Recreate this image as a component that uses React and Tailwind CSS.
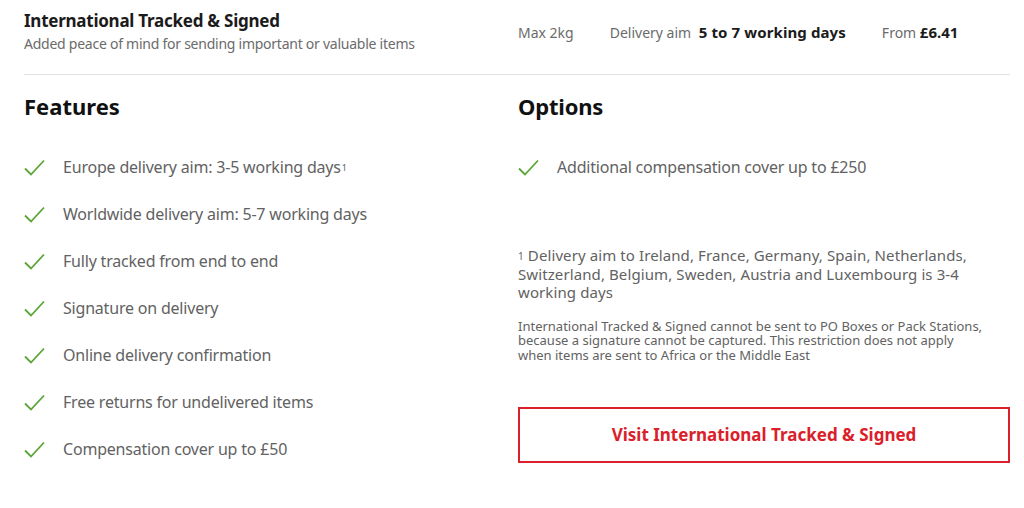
const features = [
  { text: "Europe delivery aim: 3-5 working days", sup: "1" },
  { text: "Worldwide delivery aim: 5-7 working days" },
  { text: "Fully tracked from end to end" },
  { text: "Signature on delivery" },
  { text: "Online delivery confirmation" },
  { text: "Free returns for undelivered items" },
  { text: "Compensation cover up to £50" },
];

const Check = () => (
  <svg width="21" height="17" viewBox="0 0 21 17" fill="none" className="shrink-0">
    <path d="M1 9.5L7 15.5L20 1.5" stroke="#5aa535" strokeWidth="1.8" />
  </svg>
);

const Item = ({ text, sup }) => (
  <li className="flex items-center h-6">
    <Check />
    <span className="ml-[18px] text-[16px] leading-6 text-[#626262] tracking-[-0.2px]">
      {text}
      {sup && <sup className="text-[9px] ml-[1px] relative -top-[2px]">{sup}</sup>}
    </span>
  </li>
);

export default function App() {
  return (
    <div
      className="w-[1024px] h-[508px] bg-white pl-6 pr-[14px] overflow-hidden"
      style={{ fontFamily: '"Noto Sans", Arial, sans-serif' }}
    >
      <header className="grid grid-cols-[470px_1fr] gap-6 pt-[10px] pb-5 border-b border-[#e2e2e2]">
        <div>
          <h1 className="text-[17px] leading-[22px] font-bold text-[#1b1b1b] tracking-[-0.25px]">
            International Tracked &amp; Signed
          </h1>
          <p className="mt-[2px] text-[14px] leading-5 text-[#6b6b6b] tracking-[-0.25px]">
            Added peace of mind for sending important or valuable items
          </p>
        </div>
        <div className="flex items-center gap-[36px] text-[14px] text-[#6b6b6b] h-[44px]">
          <span>Max 2kg</span>
          <span>
            Delivery aim <b className="ml-1 text-[15px] text-[#1b1b1b] tracking-[0.1px]">5 to 7 working days</b>
          </span>
          <span>
            From <b className="text-[15px] text-[#1b1b1b]">£6.41</b>
          </span>
        </div>
      </header>

      <main className="grid grid-cols-[470px_1fr] gap-6 pt-[17px]">
        <section>
          <h2 className="text-[22px] leading-7 font-bold text-[#111]">Features</h2>
          <ul className="mt-[35px] flex flex-col gap-[23px]">
            {features.map((f) => (
              <Item key={f.text} {...f} />
            ))}
          </ul>
        </section>

        <section>
          <h2 className="text-[22px] leading-7 font-bold text-[#111] tracking-[-0.2px]">Options</h2>
          <ul className="mt-[35px]">
            <Item text="Additional compensation cover up to £250" />
          </ul>
          <p className="mt-[67px] text-[15px] leading-[18.5px] text-[#626262] tracking-[0.1px]">
            <sup className="text-[10px] relative -top-[1px] mr-[4px]">1</sup>Delivery aim to Ireland, France, Germany, Spain,
            Netherlands, Switzerland, Belgium, Sweden, Austria and Luxembourg is 3-4 working days
          </p>
          <p className="mt-[17px] text-[13px] leading-[14.5px] text-[#626262]">
            International Tracked &amp; Signed cannot be sent to PO Boxes or Pack Stations, because a signature cannot
            be captured. This restriction does not apply
            <br />
            when items are sent to Africa or the Middle East
          </p>
          <a
            href="#"
            className="mt-[45px] flex items-center justify-center h-[56px] border-2 border-[#da202a] text-[#da202a] text-[17px] font-bold"
          >
            Visit International Tracked &amp; Signed
          </a>
        </section>
      </main>
    </div>
  );
}
